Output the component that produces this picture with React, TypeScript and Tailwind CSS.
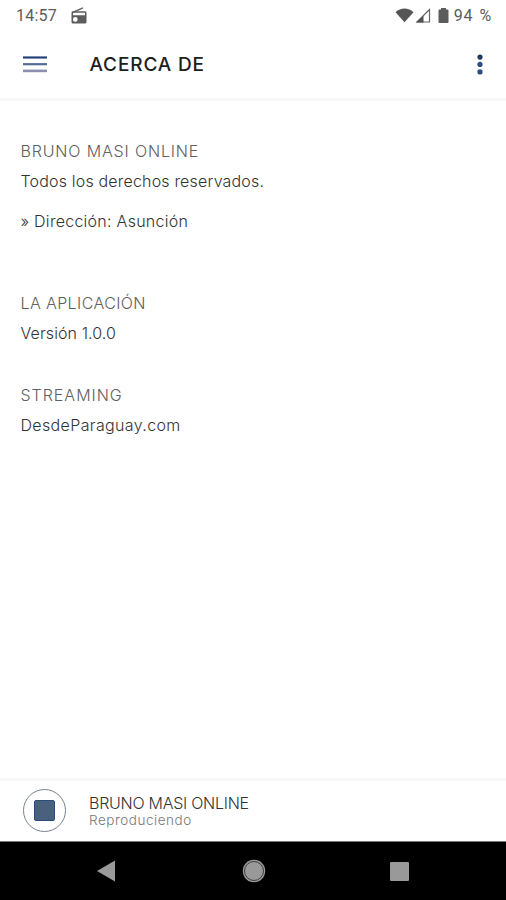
import React from 'react';

interface InfoLine {
  text: string;
  className: string;
}

interface InfoSection {
  title: string;
  titleClass: string;
  className: string;
  lines: InfoLine[];
}

const SECTIONS: InfoSection[] = [
  {
    title: 'BRUNO MASI ONLINE',
    titleClass: 'tracking-[0.85px]',
    className: 'h-[152px]',
    lines: [
      { text: 'Todos los derechos reservados.', className: 'tracking-[0.18px]' },
      { text: '» Dirección: Asunción', className: 'mt-4 tracking-[0.27px]' },
    ],
  },
  {
    title: 'LA APLICACIÓN',
    titleClass: 'tracking-[0.4px]',
    className: 'h-[92px]',
    lines: [{ text: 'Versión 1.0.0', className: 'tracking-[0.1px]' }],
  },
  {
    title: 'STREAMING',
    titleClass: 'tracking-[0.98px]',
    className: 'h-[92px]',
    lines: [{ text: 'DesdeParaguay.com', className: 'tracking-[0.36px]' }],
  },
];

function StatusBar() {
  return (
    <div className="flex h-8 shrink-0 items-center justify-between pl-4 pr-[14px] text-[16px] text-[#5c5c5c] font-['Roboto',sans-serif]">
      <div className="flex items-center">
        <span className="w-[54px] tracking-[0.2px]">14:57</span>
        <svg width="18" height="18" viewBox="0 0 18 18">
          <path d="M2.500 5.500 13 .8" stroke="#666" strokeWidth="1.4" />
          <path
            fill="#5c5c5c"
            fillRule="evenodd"
            d="M3 4.200h12a1.500 1.500 0 0 1 1.500 1.500v9.300a1.500 1.500 0 0 1-1.500 1.500H3a1.500 1.500 0 0 1-1.500-1.500V5.700A1.500 1.500 0 0 1 3 4.200Zm0 1.600v2.400h12V5.800Zm2.300 4.200a2.400 2.400 0 1 0 0 4.800 2.400 2.400 0 0 0 0-4.800Z"
          />
        </svg>
      </div>
      <div className="flex items-center">
        <svg width="56" height="18" viewBox="0 0 56 18">
          <path d="M.500 5.200C5.700.4 13.300.4 18.500 5.200L9.500 15.300Z" fill="#555" />
          <path d="M34.500 2.500v12.500H22Z" fill="none" stroke="#666" strokeWidth="1.200" />
          <path d="M28.500 8.500V15.500H21Z" fill="#505050" />
          <path d="M46 1h5v1.600H52.500a1 1 0 0 1 1 1V15a1 1 0 0 1-1 1h-8a1 1 0 0 1-1-1V3.600a1 1 0 0 1 1-1H46Z" fill="#5c5c5c" />
        </svg>
        <span className="ml-[3px] tracking-[0.8px] [word-spacing:1.5px]">94 %</span>
      </div>
    </div>
  );
}

function Toolbar() {
  return (
    <header className="flex h-[66px] shrink-0 items-center pl-[23px] pr-[22px]">
      <svg width="24" height="18" viewBox="0 0 24 18">
        <path d="M0 1.500h24" stroke="#24427a" strokeWidth="2.200" />
        <path d="M0 8.200h24" stroke="#536d94" strokeWidth="2.200" />
        <path d="M0 14.900h24" stroke="#8c8fad" strokeWidth="2.600" />
      </svg>
      <h1 className="ml-[42.5px] text-[19px] font-medium tracking-[0.85px] text-[#202020]">ACERCA DE</h1>
      <svg className="ml-auto" width="8" height="22" viewBox="0 0 8 22">
        <circle cx="4" cy="3.100" r="2.600" fill="#20375f" />
        <circle cx="4" cy="10.400" r="2.600" fill="#2b4d80" />
        <circle cx="4" cy="17.900" r="2.600" fill="#2b4d80" />
      </svg>
    </header>
  );
}

function PlayerBar() {
  return (
    <div className="flex h-[60px] shrink-0 items-center pl-[23px]">
      <button className="mb-px flex size-[43px] items-center justify-center rounded-full border border-[#77818d]">
        <span className="size-[21px] rounded-[2px] border border-[#2c4d7b] bg-[#4a607f]" />
      </button>
      <div className="ml-[23px] pt-0.5">
        <div className="text-[16px] leading-[17px] font-light tracking-[-0.26px] text-[#333]">BRUNO MASI ONLINE</div>
        <div className="text-[13.5px] leading-[17px] font-light tracking-[0.55px] text-[#777]">Reproduciendo</div>
      </div>
    </div>
  );
}

function NavigationBar() {
  return (
    <nav className="flex h-[59px] shrink-0 items-center border-t border-[#777] bg-black pl-[96px]">
      <svg width="20" height="22" viewBox="0 0 20 22">
        <path d="M19 .5v21L1 11Z" fill="#999" />
      </svg>
      <svg className="ml-[126px]" width="24" height="24" viewBox="0 0 24 24">
        <circle cx="12" cy="12" r="11.200" fill="#999" />
        <circle cx="12" cy="12" r="9.500" fill="none" stroke="#333" strokeWidth="0.900" />
      </svg>
      <span className="ml-[124px] size-[19px] rounded-[1px] bg-[#999]" />
    </nav>
  );
}

export default function App() {
  return (
    <div className="flex h-screen flex-col bg-white font-['Inter',sans-serif]">
      <StatusBar />
      <Toolbar />
      <main className="flex-1 border-y-[3px] border-[#f8f8f8] px-[20.5px] pt-[38px]">
        {SECTIONS.map((section) => (
          <section key={section.title} className={section.className}>
            <h2 className={`mb-1.5 text-[16px] leading-6 font-light text-[#606060] ${section.titleClass}`}>
              {section.title}
            </h2>
            {section.lines.map((line) => (
              <p key={line.text} className={`text-[16px] leading-6 font-light text-[#333] ${line.className}`}>
                {line.text}
              </p>
            ))}
          </section>
        ))}
      </main>
      <PlayerBar />
      <NavigationBar />
    </div>
  );
}
